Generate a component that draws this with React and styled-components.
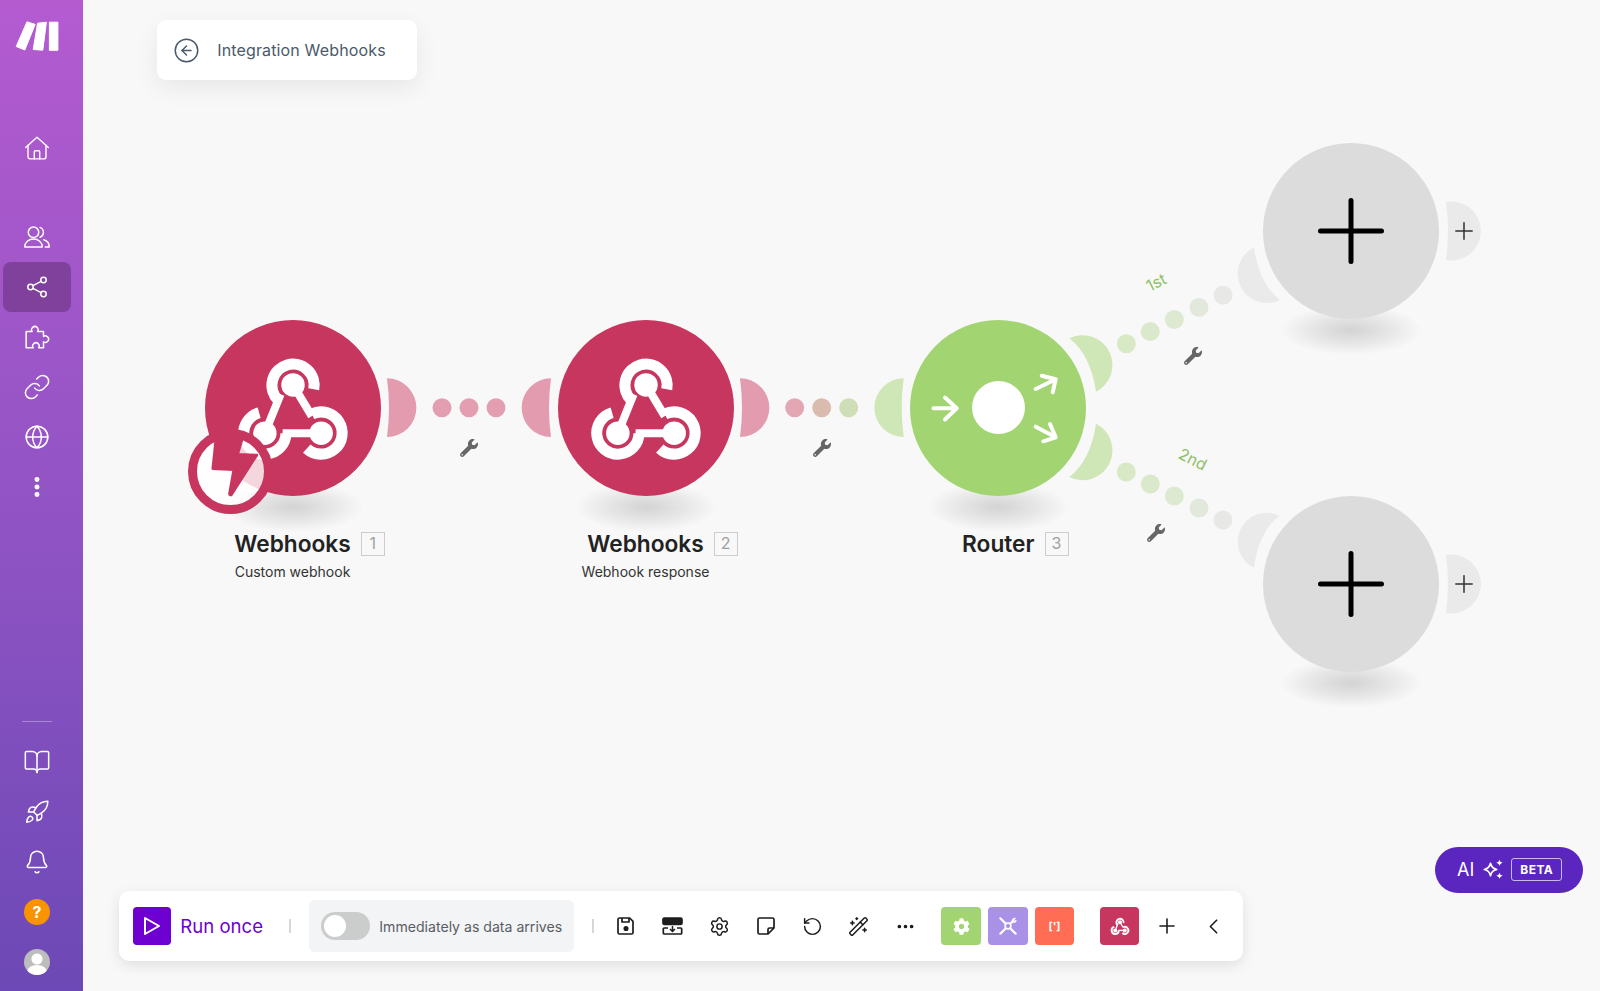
import React from 'react';
import styled, { createGlobalStyle } from 'styled-components';
import {
  Globe, MoreVertical, BookOpen, Rocket, Bell,
  CircleArrowLeft, Settings, RotateCcw, WandSparkles, Ellipsis, Plus, ChevronLeft, Link,
} from 'lucide-react';
import { FaWrench, FaCog } from 'react-icons/fa';

const SIDEBAR = 83;

const Global = createGlobalStyle`
  html, body { margin: 0; padding: 0; height: 100%; background: #f8f8f8; }
  body { font-family: Inter, "Liberation Sans", sans-serif; overflow: hidden; }
  #root { height: 100%; }
`;

const Page = styled.div`
  display: flex;
  width: 1600px;
  height: 991px;
  background: #f8f8f8;
`;

const Sidebar = styled.nav`
  flex: 0 0 ${SIDEBAR}px;
  height: 991px;
  display: flex;
  flex-direction: column;
  align-items: flex-start;
  padding: 21px 0 4px 3px;
  box-sizing: border-box;
  background: linear-gradient(180deg, #b45bd0 0%, #8f53c3 55%, #6c49b6 100%);
`;

const LogoMark = styled.svg`
  width: 44px;
  height: 31px;
  margin-left: 12px;
  margin-bottom: 71px;
  color: #fff;
`;

const NavGroup = styled.div`
  display: flex;
  flex-direction: column;
  margin-top: ${(p) => p.$top || 0}px;
`;

const NavItem = styled.div`
  width: 68px;
  height: 50px;
  display: flex;
  align-items: center;
  justify-content: center;
  border-radius: 8px;
  color: #fff;
  background: ${(p) => (p.$active ? '#7f419b' : 'transparent')};
`;

const NavRule = styled.div`
  width: 30px;
  height: 1px;
  margin: auto 0 15px 19px;
  background: rgba(255, 255, 255, 0.32);
`;

const HelpDot = styled.div`
  width: 26px;
  height: 26px;
  border-radius: 50%;
  background: #f89400;
  color: #fff;
  font-size: 16px;
  font-weight: 700;
  display: flex;
  align-items: center;
  justify-content: center;
`;

const AvatarDot = styled.div`
  width: 26px;
  height: 26px;
  border-radius: 50%;
  background: #bdbdbd;
  overflow: hidden;
  display: flex;
`;

const Canvas = styled.main`
  position: relative;
  flex: 1;
  height: 991px;
  box-sizing: border-box;
  padding: 20px 17px 30px 36.3px;
  display: flex;
  flex-direction: column;
  justify-content: space-between;
  align-items: stretch;
`;

const BackCard = styled.div`
  position: relative;
  z-index: 2;
  align-self: flex-start;
  margin-left: 37.4px;
  width: 260px;
  height: 60px;
  box-sizing: border-box;
  padding-left: 16.5px;
  display: flex;
  align-items: center;
  gap: 17px;
  background: #fff;
  border-radius: 9px;
  box-shadow: 0 8px 24px rgba(0, 0, 0, 0.07);
  color: #4a5a6a;
  font-size: 16px;
  letter-spacing: 0.15px;
`;

const Links = styled.svg`
  position: absolute;
  left: 0;
  top: 0;
  width: ${1600 - SIDEBAR}px;
  height: 991px;
`;

const Node = styled.div`
  position: absolute;
  left: ${(p) => p.$x - 88 - SIDEBAR}px;
  top: ${(p) => p.$y - 88}px;
  width: 176px;
  height: 176px;
`;

const NodeShadow = styled.div`
  position: absolute;
  left: 17px;
  top: 162px;
  width: 142px;
  height: 50px;
  background: radial-gradient(closest-side, rgba(0, 0, 0, 0.15), rgba(0, 0, 0, 0.07) 55%, rgba(0, 0, 0, 0));
`;

const NodeDisc = styled.div`
  position: absolute;
  inset: 0;
  border-radius: 50%;
  background: ${(p) => p.$color};
  display: flex;
  align-items: center;
  justify-content: center;
`;

const HubHole = styled.div`
  width: 53px;
  height: 53px;
  border-radius: 50%;
  background: #fff;
`;

const FullSvg = styled.svg`
  position: absolute;
  inset: 0;
  width: 176px;
  height: 176px;
`;

const TriggerBadge = styled.div`
  position: absolute;
  left: -17px;
  top: 109px;
  width: 85px;
  height: 85px;
  box-sizing: border-box;
  border: 9px solid #c7365f;
  border-radius: 50%;
  background: rgba(255, 255, 255, 0.8);
`;

const BoltSvg = styled.svg`
  position: absolute;
  left: -9px;
  top: -9px;
  width: 85px;
  height: 85px;
`;

const Caption = styled.div`
  position: absolute;
  left: -62px;
  width: 300px;
  top: 212.5px;
  display: flex;
  flex-direction: column;
  align-items: center;
  color: #222;
`;

const TitleRow = styled.div`
  position: relative;
  height: 24px;
  display: flex;
  align-items: center;
`;

const Title = styled.div`
  font-size: 22.7px;
  font-weight: 600;
  line-height: 24px;
`;

const OrderBox = styled.div`
  position: absolute;
  left: 100%;
  margin-left: 10px;
  top: 0;
  width: 24px;
  height: 24px;
  box-sizing: border-box;
  border: 1.5px solid #cdcdcd;
  color: #a0a0a0;
  font-size: 16px;
  line-height: 21px;
  text-align: center;
`;

const Sub = styled.div`
  margin-top: 5.5px;
  font-size: 14px;
  line-height: 20px;
  color: #333;
`;

const WrenchMark = styled.div`
  position: absolute;
  left: ${(p) => p.$x - 9 - SIDEBAR}px;
  top: ${(p) => p.$y - 9}px;
  width: 18px;
  height: 18px;
  color: #666;
  display: flex;
`;

const RouteLabel = styled.div`
  position: absolute;
  left: ${(p) => p.$x - 20 - SIDEBAR}px;
  top: ${(p) => p.$y - 10}px;
  width: 40px;
  height: 20px;
  line-height: 20px;
  text-align: center;
  font-size: 16px;
  color: #8dc165;
  transform: rotate(${(p) => p.$angle}deg);
`;

const BottomRow = styled.div`
  position: relative;
  z-index: 2;
  display: flex;
  justify-content: space-between;
  align-items: flex-start;
  margin-top: auto;
  height: 114.3px;
`;

const Toolbar = styled.div`
  align-self: flex-end;
  width: 1124px;
  height: 70px;
  box-sizing: border-box;
  padding-left: 14px;
  display: flex;
  align-items: center;
  background: #fff;
  border-radius: 10px;
  box-shadow: 0 4px 14px rgba(0, 0, 0, 0.1);
`;

const RunSquare = styled.div`
  width: 38px;
  height: 38px;
  border-radius: 4px;
  background: #6e00d2;
  display: flex;
  align-items: center;
  justify-content: center;
`;

const RunLabel = styled.div`
  margin-left: 9px;
  width: 84px;
  font-size: 18.6px;
  color: #6e00d2;
  white-space: nowrap;
`;

const Divider = styled.div`
  width: 2px;
  height: 14px;
  margin-left: ${(p) => p.$left}px;
  background: #d3d8dd;
`;

const SchedulePanel = styled.div`
  margin-left: 18px;
  width: 265px;
  height: 52px;
  box-sizing: border-box;
  padding-left: 12px;
  display: flex;
  align-items: center;
  gap: 9px;
  border-radius: 6px;
  background: #f3f4f6;
  font-size: 14.1px;
  color: #5a5d62;
  white-space: nowrap;
`;

const Switch = styled.div`
  width: 49px;
  height: 28px;
  box-sizing: border-box;
  padding: 3px;
  border-radius: 14px;
  background: #cbcccc;
`;

const Knob = styled.div`
  width: 22px;
  height: 22px;
  border-radius: 50%;
  background: #fff;
`;

const ToolGroup = styled.div`
  display: flex;
  margin-left: ${(p) => p.$left}px;
  gap: ${(p) => p.$gap || 0}px;
`;

const ToolButton = styled.div`
  width: 46.5px;
  height: 38px;
  display: flex;
  align-items: center;
  justify-content: center;
  color: #1d1d1f;
`;

const AppTile = styled.div`
  width: ${(p) => p.$w || 39.7}px;
  height: 38px;
  border-radius: 4px;
  background: ${(p) => p.$color};
  color: #fff;
  display: flex;
  align-items: center;
  justify-content: center;
  font-size: 11px;
  font-weight: 700;
`;

const AiButton = styled.div`
  width: 148px;
  height: 46px;
  box-sizing: border-box;
  padding-left: 22px;
  display: flex;
  align-items: center;
  border-radius: 23px;
  background: #5a26bf;
  color: #fff;
  font-size: 18px;
`;

const AiSpark = styled.svg`
  width: 21px;
  height: 21px;
  margin-left: 9px;
`;

const BetaBox = styled.div`
  margin-left: 7px;
  width: 51px;
  height: 23px;
  box-sizing: border-box;
  border: 1px solid #c9b8ec;
  border-radius: 3px;
  font-size: 12px;
  font-weight: 700;
  letter-spacing: 0.5px;
  line-height: 21px;
  text-align: center;
`;

const WebhookLogo = ({ size = 118, color = '#fff' }) => (
  <svg width={size} height={size * 0.91} viewBox="140 160 352 320" fill="none" stroke={color} aria-hidden="true">
    <path d="M378 265 A63 63 0 1 0 271 297" strokeWidth="33" />
    <path d="M279 280 L232 396" strokeWidth="24" />
    <path d="M372 339 A63 63 0 1 1 357 442" strokeWidth="33" />
    <path d="M316 252 L372 345" strokeWidth="24" />
    <path d="M215 335 A63 63 0 1 0 295 396" strokeWidth="33" />
    <path d="M400 396 L285 396" strokeWidth="24" />
    <circle cx="316" cy="252" r="35" fill={color} stroke="none" />
    <circle cx="232" cy="396" r="35" fill={color} stroke="none" />
    <circle cx="400" cy="396" r="35" fill={color} stroke="none" />
  </svg>
);

const PINK = '#e39bb0';
const GREEN = '#cfe7b7';
const GREY = '#eaeaea';

const ears = [
  ['M387 378.3A20 20 0 0 1 387 437Q391 407.7 387 378.3', PINK],
  ['M551 378.3A20 20 0 0 0 551 437Q547 407.7 551 378.3', PINK],
  ['M740 378.3A20 20 0 0 1 740 437Q744 407.7 740 378.3', PINK],
  ['M903.7 378.3A20 20 0 0 0 903.7 437Q899.7 407.7 903.7 378.3', GREEN],
  ['M1069.3 338.3A20 20 0 0 1 1096 391.7Q1090.7 355 1069.3 338.3', GREEN],
  ['M1096 423.7A20 20 0 0 1 1069.3 477Q1090.7 460.4 1096 423.7', GREEN],
  ['M1254 247.3A20 20 0 0 0 1280 300Q1259 283.7 1254 247.3', GREY],
  ['M1279.3 515.7A20 20 0 0 0 1254 567.7Q1258.7 531.7 1279.3 515.7', GREY],
  ['M1446 202A29.5 29.5 0 1 1 1446 260Q1450 231 1446 202', GREY],
  ['M1446 555A29.5 29.5 0 1 1 1446 613Q1450 584 1446 555', GREY],
];

const routeColors = ['#d7e9c5', '#dae9cc', '#dee9d2', '#e2e8db', '#e8e8e6'];
const routeX = [1126.3, 1150.3, 1174.3, 1199, 1223];
const dots = [
  [442, 407.7, '#e39eb1'], [469, 407.7, '#e39eb1'], [496, 407.7, '#e39eb1'],
  [794.7, 407.7, '#e3a6b4'], [821.7, 407.7, '#d9bcae'], [848.7, 407.7, '#cfdeb7'],
  ...routeX.map((x, i) => [x, 343.7 - i * 12.1, routeColors[i]]),
  ...routeX.map((x, i) => [x, 472 + i * 12, routeColors[i]]),
];

const EmptyNode = ({ y }) => (
  <Node $x={1351} $y={y}>
    <NodeShadow />
    <NodeDisc $color="#dcdcdc">
      <svg width="70" height="70" viewBox="0 0 70 70" stroke="#000" strokeWidth="5" strokeLinecap="round">
        <path d="M35 4.5V65.5M4.5 35H65.5" />
      </svg>
    </NodeDisc>
  </Node>
);

const SmallPlus = styled.div`
  position: absolute;
  left: ${1464 - 14 - SIDEBAR}px;
  top: ${(p) => p.$y - 14}px;
  width: 28px;
  height: 28px;
  color: #333;
  display: flex;
`;

const HomeIcon = () => (
  <svg width="26" height="26" viewBox="0 0 24 24" fill="none" stroke="currentColor" strokeWidth="1.3" strokeLinecap="round" strokeLinejoin="round">
    <path d="M1.5 11.5L12 2l10.5 9.5" />
    <path d="M3.7 9.5V20a2 2 0 0 0 2 2h12.6a2 2 0 0 0 2-2V9.5" />
    <path d="M9.5 22v-6.5a1 1 0 0 1 1-1h3a1 1 0 0 1 1 1V22" />
  </svg>
);

const TeamIcon = () => (
  <svg width="28" height="28" viewBox="0 0 24 24" fill="none" stroke="currentColor" strokeWidth="1.25" strokeLinecap="round" strokeLinejoin="round">
    <circle cx="9" cy="8" r="4.5" />
    <path d="M1.5 20.5c0-4 3.4-6.7 7.5-6.7s7.5 2.7 7.5 6.7z" />
    <path d="M14.6 3.8a4.5 4.5 0 0 1 0 8.4" />
    <path d="M17.8 14.3c2.8.8 4.7 3.1 4.7 6.2h-3.4" />
  </svg>
);

const ShareIcon = () => (
  <svg width="24" height="24" viewBox="0 0 24 24" fill="none" stroke="currentColor" strokeWidth="1.5">
    <circle cx="18.5" cy="5" r="2.7" />
    <circle cx="5.5" cy="12" r="2.7" />
    <circle cx="18.5" cy="19" r="2.7" />
    <path d="M8 10.7L16.1 6.3M8 13.3L16.1 17.7" />
  </svg>
);

const PuzzleIcon = () => (
  <svg width="26" height="26" viewBox="0 0 24 24" fill="none" stroke="currentColor" strokeWidth="1.4" strokeLinejoin="round">
    <path d="M2 7h5.5a3 3 0 1 1 5 0H18v4.5a3 3 0 1 1 0 5V22h-4.5a3 3 0 1 0-5 0H2z" />
  </svg>
);

const SaveIcon = () => (
  <svg width="20" height="20" viewBox="0 0 20 20" fill="none" stroke="currentColor" strokeWidth="1.7" strokeLinejoin="round">
    <path d="M3.5 2h10.2L17 5.3V16.5a1.5 1.5 0 0 1-1.5 1.5h-12A1.5 1.5 0 0 1 2 16.5v-13A1.5 1.5 0 0 1 3.5 2z" />
    <path d="M6 2v4h7V2" />
    <circle cx="10" cy="12.5" r="1.7" fill="currentColor" />
  </svg>
);

const DeployIcon = () => (
  <svg width="21" height="20" viewBox="0 0 21 20" fill="none" stroke="currentColor" strokeWidth="1.7" strokeLinejoin="round">
    <rect x="1" y="2" width="19" height="6.5" rx="1.5" fill="currentColor" />
    <path d="M6 12H2.3a1 1 0 0 0-1 1v4a1 1 0 0 0 1 1h16.4a1 1 0 0 0 1-1v-4a1 1 0 0 0-1-1H15" />
    <path d="M10.5 10v5M8 13l2.5 2.5L13 13" strokeWidth="1.5" />
  </svg>
);

const NoteIcon = () => (
  <svg width="20" height="20" viewBox="0 0 20 20" fill="none" stroke="currentColor" strokeWidth="1.7" strokeLinejoin="round">
    <path d="M3.5 2h13A1.5 1.5 0 0 1 18 3.5V12l-6 6H3.5A1.5 1.5 0 0 1 2 16.5v-13A1.5 1.5 0 0 1 3.5 2z" />
    <path d="M18 12h-4.5a1.5 1.5 0 0 0-1.5 1.5V18" />
  </svg>
);

const PlayIcon = () => (
  <svg width="18" height="20" viewBox="0 0 18 20" fill="none" stroke="#fff" strokeWidth="2" strokeLinejoin="round">
    <path d="M2 2L16 10L2 18Z" />
  </svg>
);

const ToolsIcon = () => (
  <svg width="20" height="20" viewBox="0 0 26 26" fill="none" stroke="#fff" strokeWidth="2.8" strokeLinecap="round">
    <circle cx="13" cy="13" r="3.8" strokeWidth="2" />
    <path d="M3 3l7.2 7.2M15.8 15.8L23 23M3 23l7.2-7.2M15.8 10.2L19 7" />
    <path d="M18.6 7.4c-.8-2.6 1-5 4-4.6l-2.4 2.6 1 1.3 2.4-1.6c.2 3-2.2 4.6-5 2.3" fill="#fff" strokeWidth="1" />
  </svg>
);

const Sparks = () => (
  <AiSpark viewBox="0 0 21 21">
    <path d="M7.5 4.3C8.3 8 9.8 9.7 13.7 10.5 9.8 11.3 8.3 13 7.5 16.7 6.7 13 5.2 11.3 1.3 10.5 5.2 9.7 6.7 8 7.5 4.3Z" fill="none" stroke="#fff" strokeWidth="1.7" strokeLinejoin="round" />
    <path d="M16.5 0.5C16.9 2.4 17.7 3.3 19.8 3.8 17.7 4.3 16.9 5.2 16.5 7.1 16.1 5.2 15.3 4.3 13.2 3.8 15.3 3.3 16.1 2.4 16.5 0.5Z" fill="#fff" />
    <path d="M16.5 13.5C16.9 15.4 17.7 16.3 19.8 16.8 17.7 17.3 16.9 18.2 16.5 20.1 16.1 18.2 15.3 17.3 13.2 16.8 15.3 16.3 16.1 15.4 16.5 13.5Z" fill="#fff" />
  </AiSpark>
);

const ic = { size: 26, strokeWidth: 1.4 };

export default function App() {
  return (
    <Page>
      <Global />
      <Sidebar>
        <LogoMark viewBox="0 0 44 31" fill="currentColor" stroke="currentColor" strokeWidth="1" strokeLinejoin="round">
          <path d="M12 .8L20.2 3.4 9.8 29 1.2 25.5z" />
          <path d="M22.6 2.2L31.4 1.2 27.8 29.2 18.2 28.5z" />
          <path d="M34.4 1.2H42.9V29.3H34.4z" />
        </LogoMark>
        <NavItem><HomeIcon /></NavItem>
        <NavGroup $top={39}>
          <NavItem><TeamIcon /></NavItem>
          <NavItem $active><ShareIcon /></NavItem>
          <NavItem><PuzzleIcon /></NavItem>
          <NavItem><Link size={28} strokeWidth={1.3} /></NavItem>
          <NavItem><Globe {...ic} /></NavItem>
          <NavItem><MoreVertical size={26} strokeWidth={2.6} /></NavItem>
        </NavGroup>
        <NavRule />
        <NavGroup>
          <NavItem><BookOpen size={28} strokeWidth={1.3} /></NavItem>
          <NavItem><Rocket {...ic} /></NavItem>
          <NavItem><Bell {...ic} /></NavItem>
          <NavItem><HelpDot>?</HelpDot></NavItem>
          <NavItem>
            <AvatarDot>
              <svg width="26" height="26" viewBox="0 0 26 26" fill="#fff">
                <circle cx="13" cy="10" r="5.6" />
                <ellipse cx="13" cy="23" rx="10" ry="7" />
              </svg>
            </AvatarDot>
          </NavItem>
        </NavGroup>
      </Sidebar>

      <Canvas>
        <Links viewBox={`${SIDEBAR} 0 ${1600 - SIDEBAR} 991`}>
          {ears.map(([d, fill]) => <path key={d} d={d} fill={fill} />)}
          {dots.map(([cx, cy, fill]) => <circle key={`${cx}-${cy}`} cx={cx} cy={cy} r="9.5" fill={fill} />)}
        </Links>

        <Node $x={292.5} $y={407.7}>
          <NodeShadow />
          <NodeDisc $color="#c7365f"><WebhookLogo /></NodeDisc>
          <TriggerBadge>
            <BoltSvg viewBox="0 0 85 85">
              <path d="M28 8.7H54.7L49.7 25.3 69 26 43.6 65.5a1.2 1.2 0 0 1-2.2-.8L45.7 40.7 24.7 39.7Z" fill="#c7365f" stroke="#c7365f" strokeWidth="2.5" strokeLinejoin="round" />
            </BoltSvg>
          </TriggerBadge>
          <Caption>
            <TitleRow><Title>Webhooks</Title><OrderBox>1</OrderBox></TitleRow>
            <Sub>Custom webhook</Sub>
          </Caption>
        </Node>

        <Node $x={645.5} $y={407.7}>
          <NodeShadow />
          <NodeDisc $color="#c7365f"><WebhookLogo /></NodeDisc>
          <Caption>
            <TitleRow><Title>Webhooks</Title><OrderBox>2</OrderBox></TitleRow>
            <Sub>Webhook response</Sub>
          </Caption>
        </Node>

        <Node $x={998.3} $y={407.7}>
          <NodeShadow />
          <NodeDisc $color="#a2d471"><HubHole /></NodeDisc>
          <FullSvg viewBox="0 0 176 176" fill="none" stroke="#fff" strokeWidth="4" strokeLinecap="round" strokeLinejoin="round">
            <path d="M23.5 88.3H46.7M35 77.5L46.7 88.3L35 99.5" />
            <path d="M125.7 69L145.7 59.3M131.7 55.7L145.7 59.3L142.7 72.3" />
            <path d="M125.7 106.7L145.7 117.3M140 104L145.7 117.3L133.3 121.3" />
          </FullSvg>
          <Caption>
            <TitleRow><Title>Router</Title><OrderBox>3</OrderBox></TitleRow>
          </Caption>
        </Node>

        <EmptyNode y={231} />
        <EmptyNode y={584} />
        <SmallPlus $y={231}><Plus size={28} strokeWidth={1.3} /></SmallPlus>
        <SmallPlus $y={584}><Plus size={28} strokeWidth={1.3} /></SmallPlus>

        <WrenchMark $x={469} $y={448}><FaWrench size={18} /></WrenchMark>
        <WrenchMark $x={821.7} $y={448}><FaWrench size={18} /></WrenchMark>
        <WrenchMark $x={1193} $y={355.7}><FaWrench size={18} /></WrenchMark>
        <WrenchMark $x={1156} $y={532.7}><FaWrench size={18} /></WrenchMark>
        <RouteLabel $x={1156} $y={282} $angle={-27}>1st</RouteLabel>
        <RouteLabel $x={1192.7} $y={459} $angle={27}>2nd</RouteLabel>

        <BackCard>
          <CircleArrowLeft size={27} strokeWidth={1.3} />
          Integration Webhooks
        </BackCard>

        <BottomRow>
          <Toolbar>
            <RunSquare><PlayIcon /></RunSquare>
            <RunLabel>Run once</RunLabel>
            <Divider $left={25} />
            <SchedulePanel>
              <Switch><Knob /></Switch>
              Immediately as data arrives
            </SchedulePanel>
            <Divider $left={18} />
            <ToolGroup $left={8.5}>
              <ToolButton><SaveIcon /></ToolButton>
              <ToolButton><DeployIcon /></ToolButton>
              <ToolButton><Settings size={21} strokeWidth={1.7} /></ToolButton>
              <ToolButton><NoteIcon /></ToolButton>
              <ToolButton><RotateCcw size={21} strokeWidth={1.7} /></ToolButton>
              <ToolButton><WandSparkles size={21} strokeWidth={1.7} /></ToolButton>
              <ToolButton><Ellipsis size={21} strokeWidth={2.2} /></ToolButton>
            </ToolGroup>
            <ToolGroup $left={13} $gap={7}>
              <AppTile $color="#a2d471"><FaCog size={17} /></AppTile>
              <AppTile $color="#aa91e8"><ToolsIcon /></AppTile>
              <AppTile $color="#ff6d55">[']</AppTile>
            </ToolGroup>
            <ToolGroup $left={26}>
              <AppTile $color="#c7365f" $w={39}><WebhookLogo size={20} /></AppTile>
            </ToolGroup>
            <ToolGroup $left={4}>
              <ToolButton><Plus size={24} strokeWidth={1.6} /></ToolButton>
              <ToolButton><ChevronLeft size={25} strokeWidth={1.6} /></ToolButton>
            </ToolGroup>
          </Toolbar>
          <AiButton>
            AI
            <Sparks />
            <BetaBox>BETA</BetaBox>
          </AiButton>
        </BottomRow>
      </Canvas>
    </Page>
  );
}
